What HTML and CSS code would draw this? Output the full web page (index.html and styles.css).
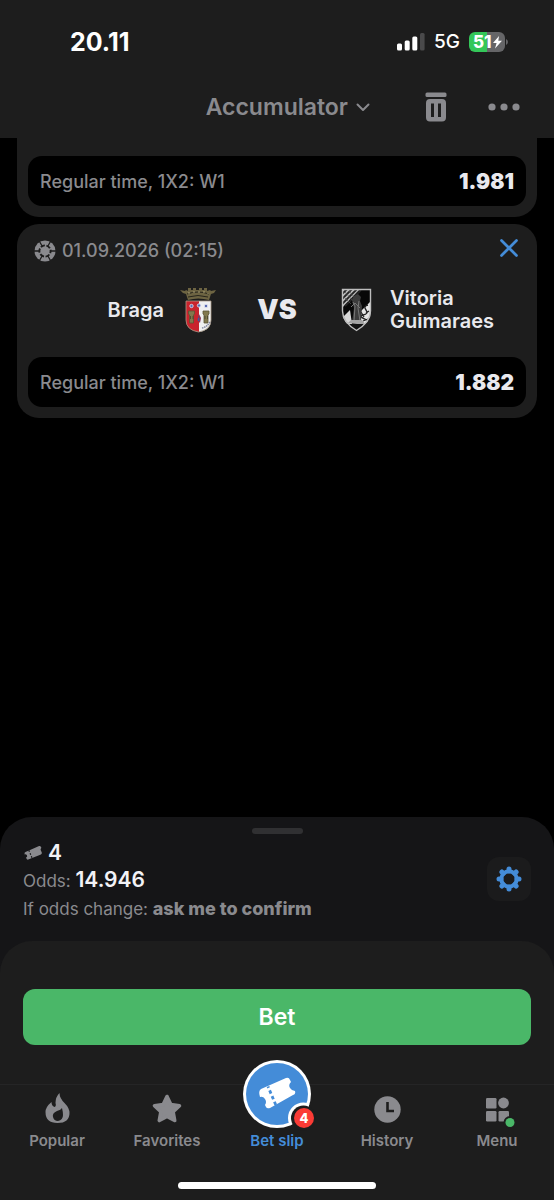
FILE: index.html
```html
<!DOCTYPE html>
<html lang="en">
<head>
<meta charset="utf-8">
<meta name="viewport" content="width=device-width, initial-scale=1">
<title>Bet slip</title>
<link rel="stylesheet" href="styles.css">
</head>
<body>
<div class="app">
  <header class="header">
    <div class="status">
      <span class="time">20.11</span>
      <div class="status-right">
        <svg width="28" height="18" viewBox="0 0 28 18" aria-hidden="true">
          <rect x="0" y="10.500" width="5" height="7" rx="1.500" fill="#fff"/>
          <rect x="7.700" y="7.500" width="5" height="10" rx="1.500" fill="#fff"/>
          <rect x="15.300" y="3.500" width="5" height="14" rx="1.500" fill="#fff"/>
          <rect x="23" y="0" width="4.600" height="17.500" rx="1.500" fill="#4a4a4b"/>
        </svg>
        <span class="network">5G</span>
        <div class="battery">
          <svg width="39" height="20" viewBox="0 0 39 20" aria-hidden="true">
            <path d="M6 0H18V20H6a6 6 0 0 1-6-6V6a6 6 0 0 1 6-6z" fill="#34c759"/>
            <path d="M18 0H30a6 6 0 0 1 6 6v8a6 6 0 0 1-6 6H18z" fill="#656567"/>
            <path d="M37 7q2 .8 2 3t-2 3z" fill="#656567"/>
            <path d="M30 4 24 11h3.600L26 16.500l7-7.700h-3.700z" fill="#fff"/>
          </svg>
          <span class="battery-level">51</span>
        </div>
      </div>
    </div>
    <div class="toolbar">
      <button class="type-button" type="button">Accumulator
        <svg width="14" height="9" viewBox="0 0 14 9" aria-hidden="true"><path d="M1.500 1.500 7 7l5.500-5.500" fill="none" stroke="#8a8a8e" stroke-width="2" stroke-linecap="round" stroke-linejoin="round"/></svg>
      </button>
      <button class="icon-button" type="button" aria-label="Clear bet slip">
        <svg width="22" height="30" viewBox="0 0 22 30" aria-hidden="true">
          <rect x=".5" y=".5" width="21" height="4.500" rx="1.500" fill="#8a8a8e"/>
          <path fill-rule="evenodd" d="M5 7h12a4 4 0 0 1 4 4v14.500a4 4 0 0 1-4 4H5a4 4 0 0 1-4-4V11a4 4 0 0 1 4-4zM6 11.500v13.500h3V11.500zm7 0v13.500h3V11.500z" fill="#8a8a8e"/>
        </svg>
      </button>
      <button class="icon-button" type="button" aria-label="More">
        <svg width="32" height="8" viewBox="0 0 32 8" aria-hidden="true" fill="#8a8a8e"><circle cx="4" cy="4" r="3.600"/><circle cx="16" cy="4" r="3.600"/><circle cx="28" cy="4" r="3.600"/></svg>
      </button>
    </div>
  </header>

  <main class="bets">
    <article class="card card-scrolled">
      <div class="pick"><span class="pick-name">Regular time, 1X2: W1</span><span class="pick-odds">1.981</span></div>
    </article>
    <article class="card">
      <div class="card-head">
        <svg width="22" height="22" viewBox="0 0 22 22" aria-hidden="true">
          <circle cx="11" cy="11" r="10.500" fill="#8a8a8e"/>
          <circle cx="11" cy="11" r="5.600" fill="none" stroke="#1d1d1d" stroke-width="1.900" stroke-dasharray="4.260 1.600" stroke-dashoffset="2.130"/>
          <path d="M16.500 11H22M13.750 15.760l2.750 4.770M8.250 15.760 5.500 20.530M5.500 11H0M8.250 6.240 5.500 1.470M13.750 6.240l2.750-4.770" stroke="#1d1d1d" stroke-width="1.300"/>
        </svg>
        <time class="date" datetime="2026-09-01T02:15">01.09.2026 (02:15)</time>
        <button class="close" type="button" aria-label="Remove bet">
          <svg width="18" height="18" viewBox="0 0 18 18" aria-hidden="true"><path d="M1.500 1.500l15 15M16.500 1.500l-15 15" stroke="#448cd8" stroke-width="2.700" stroke-linecap="round"/></svg>
        </button>
      </div>
      <div class="match">
        <div class="team team-home">
          <span>Braga</span>
          <svg width="46" height="46" viewBox="0 0 46 46" role="img" aria-label="Braga crest">
            <path d="M5 3l5 1 1-1 2 1V1h3v2h2V1h3v2h3V1h3v2h2V1h3v3l3-1 1 1 5-1-2 3-3 1-2 6q-11-3-21 0L11 7 8 6z" fill="#6d6442"/>
            <path d="M12 7q11-4 22 0M13 10q10-3 20 0" fill="none" stroke="#28261c"/>
            <path d="M14 5v2M19 4v2M24 4v2M29 4v2M33 6v1" stroke="#aaa076" stroke-width="1"/>
            <path d="M11 14h13v31Q11 43 11 33z" fill="#c9232d"/>
            <path d="M24 14h12v19q0 10-12 12z" fill="#efeff0"/>
            <path d="M11 14h25v19q0 10-12.500 12Q11 43 11 33z" fill="none" stroke="#a99b87" stroke-width=".8"/>
            <g fill="#5b6bb2" stroke="#e3e4f0" stroke-width=".8"><circle cx="16.500" cy="19" r="1.700"/><circle cx="24" cy="18.500" r="1.700"/><circle cx="31" cy="19" r="1.700"/></g>
            <path d="M13.500 24h6v3l-1 1v8h-4v-8l-1-1zM28 24h6v3l-1 1v8h-4v-8l-1-1z" fill="#81784e" stroke="#5c5435" stroke-width=".8"/>
            <path d="M15.500 29v3M18 29v3M30 29v3M32.500 29v3" stroke="#4a452e" stroke-width=".9"/>
            <path d="M24 27l2 4-1 5-2-2v-5z" fill="#8b345a"/>
            <path d="M23.500 31v3" stroke="#3b5a9e" stroke-width="1.500"/>
            <path d="M27 41q5-1 8-6" fill="none" stroke="#81859f" stroke-width="1.500" stroke-dasharray="1.500 .7"/>
          </svg>
        </div>
        <span class="versus">VS</span>
        <div class="team">
          <svg width="46" height="46" viewBox="0 0 46 46" role="img" aria-label="Vitoria Guimaraes crest">
            <defs><clipPath id="shield"><path d="M9 2h29v22q0 11-14.500 20Q9 36 9 24z"/></clipPath></defs>
            <g clip-path="url(#shield)">
              <path d="M8 1h31v44H8z" fill="#080808"/>
              <path d="M9 2h18L9 21z" fill="#bcbcbc"/>
              <path d="M9 17 24 2M9 12l10-10M9 7l5-5M12 19 28 3" stroke="#242424" stroke-width="1.800"/>
              <path d="M16 4l7 8M12 5l8 9M10 9l8 8" stroke="#555" stroke-width=".7"/>
              <path d="M38 14v23l-9 2-3-13z" fill="#e4e4e4"/>
              <path d="M35 18q-5 1-2 5t-3 5 4 5M36 24l-3 2M28 25l3 5M30 34l5-2" fill="none" stroke="#202020" stroke-width="1.300"/>
              <path d="M9 31l8-8 2 14h-8z" fill="#d8d8d8"/>
              <path d="M19 13l2-4 4-2 3 3-1 4 2 5-1 16h-9l2-14z" fill="#3c3c3c"/>
              <path d="M20 15l2 4-1 15M26 14l-1 7 2 13M18 20l4-4 5 5" fill="none" stroke="#777" stroke-width="1"/>
              <path d="M15 36l3-3h11l4 5z" fill="#a3a3a3"/>
              <path d="M13 37h22l-11 8z" fill="#111"/>
            </g>
            <path d="M9.500 2.500h28V24q0 11-14 19.500Q9.500 35 9.500 24z" fill="none" stroke="#bdbdbd" stroke-width="1.400"/>
          </svg>
          <span>Vitoria Guimaraes</span>
        </div>
      </div>
      <div class="pick"><span class="pick-name">Regular time, 1X2: W1</span><span class="pick-odds">1.882</span></div>
    </article>
  </main>

  <section class="sheet">
    <div class="handle"></div>
    <div class="summary">
      <div>
        <p class="line count">
          <svg width="18" height="14" viewBox="0 0 38 30" aria-hidden="true">
            <path d="M3 13 32 0q3-1 4 2l1 2q-3 3-1 6t2 5q0 2-2 3L9 29q-3 1-4-2l-1-2q4-2 2-5t-5-2q-1-4 2-5z" fill="#8a8a8e"/>
            <path d="M10 9l8 19" stroke="#151517" stroke-width="2.500" stroke-dasharray="3.500 3.500"/>
          </svg>
          <strong class="value">4</strong>
        </p>
        <p class="line">Odds: <strong class="value">14.946</strong></p>
        <p class="line">If odds change: <strong class="policy">ask me to confirm</strong></p>
      </div>
      <button class="settings" type="button" aria-label="Settings">
        <svg width="26" height="26" viewBox="0 0 26 26" aria-hidden="true">
          <circle cx="13" cy="13" r="7.700" fill="none" stroke="#448cd8" stroke-width="4"/>
          <g stroke="#448cd8" stroke-width="5" stroke-linecap="round"><path d="M13 3v2M13 21v2M3 13h2M21 13h2M5.900 5.900l1.400 1.400M18.700 18.700l1.400 1.400M5.900 20.100l1.400-1.400M18.700 7.300l1.400-1.400"/></g>
        </svg>
      </button>
    </div>
    <div class="panel">
      <div class="action"><button class="bet" type="button">Bet</button></div>
      <nav class="nav" aria-label="Main">
        <a class="tab" href="#popular">
          <svg width="32" height="32" viewBox="0 0 32 32" aria-hidden="true">
            <path fill-rule="evenodd" d="M18.500 0q0 5 5 10 5 5 5 10 0 10-12 10-12 0-12-11 0-5 6-10 0 4 3 5 2-1 1-4 0-6 4-10zM21 15q-1 2-5 3-5 2-4 6 1 4 5 4 5-1 5-6 0-3-1-7z" fill="#8a8a8e"/>
          </svg>
          <span>Popular</span>
        </a>
        <a class="tab" href="#favorites">
          <svg width="32" height="32" viewBox="0 0 32 32" aria-hidden="true"><path d="M16 3.500l3.800 8 8.700 1.200-6.400 6.100 1.600 8.700-7.700-4.200-7.700 4.200 1.600-8.700-6.400-6.100 8.700-1.200z" fill="#8a8a8e" stroke="#8a8a8e" stroke-width="3.600" stroke-linejoin="round"/></svg>
          <span>Favorites</span>
        </a>
        <a class="tab tab-active" href="#slip" aria-current="page">
          <span class="slip">
            <svg class="slip-icon" width="68" height="68" viewBox="0 0 68 68" aria-hidden="true">
              <defs><clipPath id="disc"><circle cx="34" cy="34" r="34"/></clipPath></defs>
              <circle cx="34" cy="34" r="34" fill="#fff"/>
              <circle cx="34" cy="34" r="31" fill="#448cd8"/>
              <g clip-path="url(#disc)"><circle cx="60.500" cy="58" r="15.500" fill="#fff"/></g>
              <circle cx="60.500" cy="58" r="12.500" fill="#1d1d1d"/>
              <path d="M18 29 43 18q3-1 4 2l1 2q-3 3-1 6t5 3q1 3-2 4L27 48q-3 1-4-1l-1-2q2-3 0-6t-5-2q-2-6 1-8z" fill="#fff"/>
              <path d="M25 26.500l8 19" stroke="#448cd8" stroke-width="2.800" stroke-dasharray="3.500 2.700" stroke-dashoffset="2"/>
            </svg>
            <span class="badge">4</span>
          </span>
          <span>Bet slip</span>
        </a>
        <a class="tab" href="#history">
          <svg width="32" height="32" viewBox="0 0 32 32" aria-hidden="true"><circle cx="16.500" cy="16.500" r="13.200" fill="#8a8a8e"/><path d="M16.500 9v9h6.500" fill="none" stroke="#1d1d1d" stroke-width="2.600"/></svg>
          <span>History</span>
        </a>
        <a class="tab" href="#menu">
          <svg width="32" height="32" viewBox="0 0 32 32" aria-hidden="true"><g fill="#8a8a8e"><rect x="5" y="5" width="10.500" height="10.500" rx="1.200"/><circle cx="22.500" cy="10" r="5.400"/><rect x="5" y="18" width="10.500" height="10.500" rx="1.200"/><rect x="17.500" y="18" width="10.500" height="10.500" rx="1.200"/></g><circle cx="29" cy="29.500" r="6.500" fill="#1d1d1d"/><circle cx="29" cy="29.500" r="4.500" fill="#4ab768"/></svg>
          <span>Menu</span>
        </a>
      </nav>
      <div class="home-indicator"></div>
    </div>
  </section>
</div>
</body>
</html>
```
FILE: styles.css
```css
* { box-sizing: border-box; }

body {
  margin: 0;
  background: #000;
  color: #e9e9ee;
  font-family: Inter, "Liberation Sans", sans-serif;
}

button {
  border: 0;
  padding: 0;
  background: none;
  color: inherit;
  font: inherit;
  cursor: pointer;
}

svg { display: block; flex: none; overflow: visible; }

.app {
  min-height: 100vh;
  display: flex;
  flex-direction: column;
}

/* Header */
.header { background: #1d1d1d; color: #fff; }

.status {
  display: flex;
  align-items: center;
  justify-content: space-between;
  padding: 28px 46px 0 70px;
}

.time { font-size: 25px; line-height: 28px; font-weight: 700; }
.status-right { display: flex; align-items: center; gap: 9px; }
.network { font-size: 19px; line-height: 28px; font-weight: 500; }
.battery { position: relative; }

.battery-level {
  position: absolute;
  left: 4px;
  top: 0;
  font-size: 17px;
  line-height: 20px;
  font-weight: 800;
}

.toolbar {
  display: flex;
  justify-content: flex-end;
  align-items: center;
  padding: 33px 34px 13px;
  color: #8a8a8e;
}

.type-button {
  display: flex;
  align-items: center;
  gap: 8px;
  margin-right: 55px;
  font-size: 23px;
  line-height: 36px;
  font-weight: 600;
}

.icon-button + .icon-button { margin-left: 41px; }

/* Bets */
.bets {
  flex: 1;
  display: flex;
  flex-direction: column;
  gap: 7px;
  padding: 0 17px;
}

.card {
  padding: 11px;
  border-radius: 22px;
  background: #1d1d1d;
}

.card-scrolled {
  padding-top: 18px;
  border-radius: 0 0 22px 22px;
}

.card-head {
  display: flex;
  align-items: center;
  gap: 6px;
  height: 32px;
  padding: 0 8px 0 6px;
}

.date {
  color: #8a8a8e;
  font-size: 18px;
  line-height: 24px;
  font-weight: 500;
}

.close { margin-left: auto; padding-bottom: 6px; }

.match {
  display: grid;
  grid-template-columns: 1fr 40px 1fr;
  align-items: center;
  gap: 36px;
  margin: 20px 0 24px;
}

.team {
  display: flex;
  align-items: center;
  gap: 11px;
  font-size: 20px;
  line-height: 23px;
  font-weight: 600;
}

.team-home { justify-content: flex-end; }

.versus {
  text-align: center;
  font-size: 27px;
  line-height: 32px;
  font-weight: 900;
}

.pick {
  display: flex;
  align-items: center;
  justify-content: space-between;
  height: 50px;
  padding: 0 12px;
  border-radius: 14px;
  background: #000;
}

.pick-name { color: #8a8a8e; font-size: 18px; font-weight: 500; }
.pick-odds { font-size: 21px; font-weight: 900; }

/* Summary sheet */
.sheet {
  padding-top: 11px;
  border-radius: 32px 32px 0 0;
  background: #151517;
}

.handle {
  width: 51px;
  height: 6px;
  margin: 0 auto;
  border-radius: 3px;
  background: #303032;
}

.summary {
  display: flex;
  align-items: flex-start;
  justify-content: space-between;
  padding: 5px 23px 18px;
}

.line {
  margin: 0;
  min-height: 28px;
  color: #8a8a8e;
  font-size: 17px;
  line-height: 28px;
}

.count { display: flex; align-items: center; gap: 6px; padding-left: 1px; }
.value { color: #f2f2f6; font-size: 21px; line-height: 24px; font-weight: 600; }
.policy { font-size: 18px; line-height: 24px; font-weight: 800; }

.settings {
  display: grid;
  place-items: center;
  width: 44px;
  height: 44px;
  margin-top: 18px;
  border-radius: 12px;
  background: #1b1b1c;
}

.panel {
  padding: 48px 0 11px;
  border-radius: 32px 32px 0 0;
  background: #1d1d1d;
}

.action { padding: 0 23px; }

.bet {
  width: 100%;
  height: 56px;
  border-radius: 12px;
  background: #4ab768;
  color: #fff;
  font-size: 23px;
  font-weight: 600;
}

/* Bottom navigation */
.nav {
  display: grid;
  grid-template-columns: repeat(5, 1fr);
  align-items: end;
  margin-top: 39px;
  padding: 8px 2px 0;
  border-top: 1px solid #252526;
}

.tab {
  display: flex;
  flex-direction: column;
  align-items: center;
  gap: 8px;
  color: #8a8a8e;
  font-size: 15px;
  line-height: 16px;
  font-weight: 600;
  text-decoration: none;
}

.tab-active { gap: 5px; margin-top: -33px; color: #448cd8; }
.slip { position: relative; }

.badge {
  position: absolute;
  left: 51px;
  top: 48px;
  width: 20px;
  height: 20px;
  border-radius: 50%;
  background: #fb3b35;
  color: #fff;
  font-size: 13px;
  line-height: 20px;
  font-weight: 800;
  text-align: center;
}

.home-indicator {
  width: 198px;
  height: 7px;
  margin: 33px auto 0;
  border-radius: 4px;
  background: #fff;
}
```
